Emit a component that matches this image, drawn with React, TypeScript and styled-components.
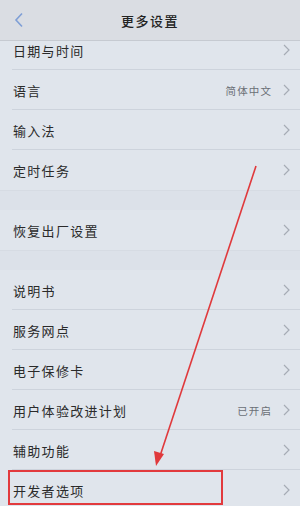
import React from "react";
import styled, { createGlobalStyle } from "styled-components";

const Global = createGlobalStyle`
  html, body { margin: 0; padding: 0; }
  body {
    width: 300px; height: 506px; overflow: hidden;
    background: #dfe4eb;
    font-family: "Noto Sans CJK SC", "Noto Sans", sans-serif;
  }
`;

const Screen = styled.div`
  position: relative;
  width: 300px;
  height: 506px;
  overflow: hidden;
  background: #dfe4eb;
  display: flex;
  flex-direction: column;
`;

const Header = styled.header`
  position: relative;
  z-index: 2;
  flex: 0 0 auto;
  height: 40px;
  border-bottom: 1px solid #c6cad1;
  background: #dadde3;
  display: grid;
  grid-template-columns: 40px 1fr 40px;
  align-items: center;
`;

const Back = styled.div`
  display: flex;
  justify-content: center;
  margin-left: -2px;
`;

const Title = styled.h1`
  margin: 0;
  text-align: center;
  font-size: 13px;
  font-weight: 500;
  letter-spacing: 1.5px;
  color: #222;
`;

const List = styled.div`
  margin-top: -11px;
  display: flex;
  flex-direction: column;
`;

const Group = styled.section`
  display: flex;
  flex-direction: column;
  background: #e0e5ec;
`;

const Gap = styled.div`
  height: 20px;
  background: #dce1e9;
  border-top: 1px solid #d6dbe3;
  box-sizing: border-box;
`;

const Row = styled.div<{ $last?: boolean }>`
  height: 40px;
  box-sizing: border-box;
  display: flex;
  align-items: center;
  padding: 0 10px 0 13px;
  position: relative;
  &::after {
    content: "";
    display: ${(p) => (p.$last ? "none" : "block")};
    position: absolute;
    left: 12px;
    right: 0;
    bottom: 0;
    height: 1px;
    background: #cdd3dc;
  }
`;

const Label = styled.span`
  flex: 1;
  font-size: 13px;
  font-weight: 400;
  letter-spacing: 1.3px;
  color: #2a2a2a;
`;

const Value = styled.span`
  font-size: 10.5px;
  letter-spacing: 1.1px;
  color: #6b6f76;
  margin-right: 11px;
`;

const Overlay = styled.svg`
  position: absolute;
  left: 0;
  top: 0;
  pointer-events: none;
  z-index: 3;
`;

const Chevron = () => (
  <svg width="7" height="12" viewBox="0 0 7 12">
    <path d="M1 1l5 5-5 5" fill="none" stroke="#a6acb5" strokeWidth="1.2" />
  </svg>
);

type Item = { label: string; value?: string };
const groups: Item[][] = [
  [
    { label: "日期与时间" },
    { label: "语言", value: "简体中文" },
    { label: "输入法" },
    { label: "定时任务" },
  ],
  [{ label: "恢复出厂设置" }],
  [
    { label: "说明书" },
    { label: "服务网点" },
    { label: "电子保修卡" },
    { label: "用户体验改进计划", value: "已开启" },
    { label: "辅助功能" },
    { label: "开发者选项" },
  ],
];

export default function App() {
  return (
    <>
      <Global />
      <Screen>
        <Header>
          <Back>
            <svg width="10" height="16" viewBox="0 0 10 16">
              <path d="M8 1.5L2 8l6 6.5" fill="none" stroke="#7f9fd6" strokeWidth="1.6" />
            </svg>
          </Back>
          <Title>更多设置</Title>
          <span />
        </Header>
        <List>
          {groups.map((g, gi) => (
            <React.Fragment key={gi}>
              {gi > 0 && <Gap />}
              <Group>
                {g.map((it, i) => (
                  <Row key={it.label} $last={i === g.length - 1}>
                    <Label>{it.label}</Label>
                    {it.value && <Value>{it.value}</Value>}
                    <Chevron />
                  </Row>
                ))}
              </Group>
            </React.Fragment>
          ))}
        </List>
        <Overlay width="300" height="506" viewBox="0 0 300 506">
          <line x1="256" y1="166" x2="160" y2="456" stroke="#e0393c" strokeWidth="1.6" />
          <path d="M156 466 L154 451 L164 454 Z" fill="#e0393c" />
          <rect x="9" y="471" width="213" height="33" fill="none" stroke="#e23a3d" strokeWidth="2" />
        </Overlay>
      </Screen>
    </>
  );
}
